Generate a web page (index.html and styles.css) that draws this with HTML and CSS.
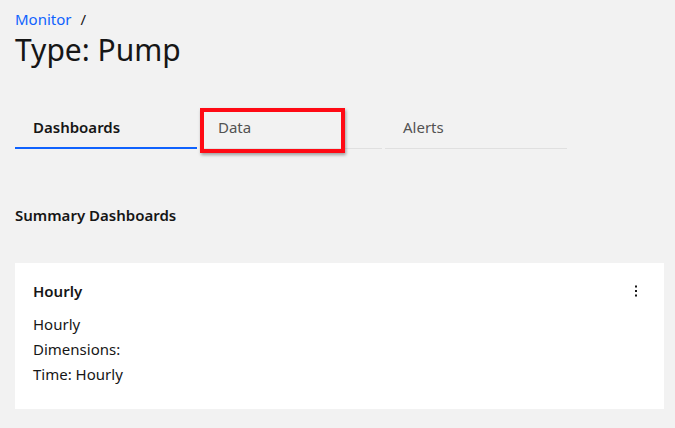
FILE: index.html
```html
<!DOCTYPE html>
<html>
<head>
<meta charset="utf-8">
<link rel="stylesheet" href="styles.css">
</head>
<body>
<div class="page">
  <nav class="breadcrumb"><a class="crumb" href="#">Monitor</a><span class="sep">/</span></nav>
  <h1 class="title">Type: Pump</h1>
  <div class="tabs">
    <div class="tab active">Dashboards</div>
    <div class="tab highlighted">Data</div>
    <div class="tab">Alerts</div>
  </div>
  <h2 class="section">Summary Dashboards</h2>
  <div class="card">
    <div class="card-head">
      <div class="card-title">Hourly</div>
      <svg class="kebab" width="16" height="16" viewBox="0 0 16 16"><rect x="7" y="2.5" width="2" height="2" fill="#161616"/><rect x="7" y="7" width="2" height="2" fill="#161616"/><rect x="7" y="11.5" width="2" height="2" fill="#161616"/></svg>
    </div>
    <div class="card-line">Hourly</div>
    <div class="card-line">Dimensions:</div>
    <div class="card-line">Time: Hourly</div>
  </div>
</div>
</body>
</html>
```
FILE: styles.css
```css
html, body { margin: 0; padding: 0; }
body {
  background: #f2f2f2;
  font-family: "Noto Sans", "Open Sans", sans-serif;
  color: #161616;
  width: 675px;
  height: 428px;
  overflow: hidden;
}
.page { padding: 9px 11px 0 15px; }
.breadcrumb { font-size: 15px; line-height: 20px; display: flex; gap: 9px; }
.crumb { color: #0f62fe; text-decoration: none; }
.sep { color: #161616; }
.title { font-size: 30px; font-weight: 400; line-height: 36px; margin: 3px 0 0 0; }
.tabs { display: flex; gap: 3px; margin-top: 43px; }
.tab {
  width: 182px; height: 38px; box-sizing: border-box;
  padding: 6px 0 0 18px;
  font-size: 15px; color: #525252;
  border-bottom: 1px solid #e0e0e0;
  position: relative;
}
.tab.active { font-weight: 600; color: #161616; border-bottom: 2px solid #0f62fe; }
.tab.highlighted::after {
  content: ""; position: absolute; left: 0; top: -3px; width: 137px; height: 37px;
  border: 4px solid #ff0a14; box-shadow: 1px 2px 3px rgba(0,0,0,0.35);
}
.section { font-size: 15px; font-weight: 600; margin: 56px 0 0 0; line-height: 20px; }
.card { background: #fff; margin-top: 38px; width: 649px; height: 146px; box-sizing: border-box; padding: 18px 19px 0 18px; }
.card-head { display: flex; justify-content: space-between; align-items: center; }
.card-title { font-size: 15px; font-weight: 600; line-height: 20px; }
.kebab { margin-right: 1px; }
.card-line { font-size: 15px; line-height: 25px; }
.card-head + .card-line { margin-top: 11px; }
```
